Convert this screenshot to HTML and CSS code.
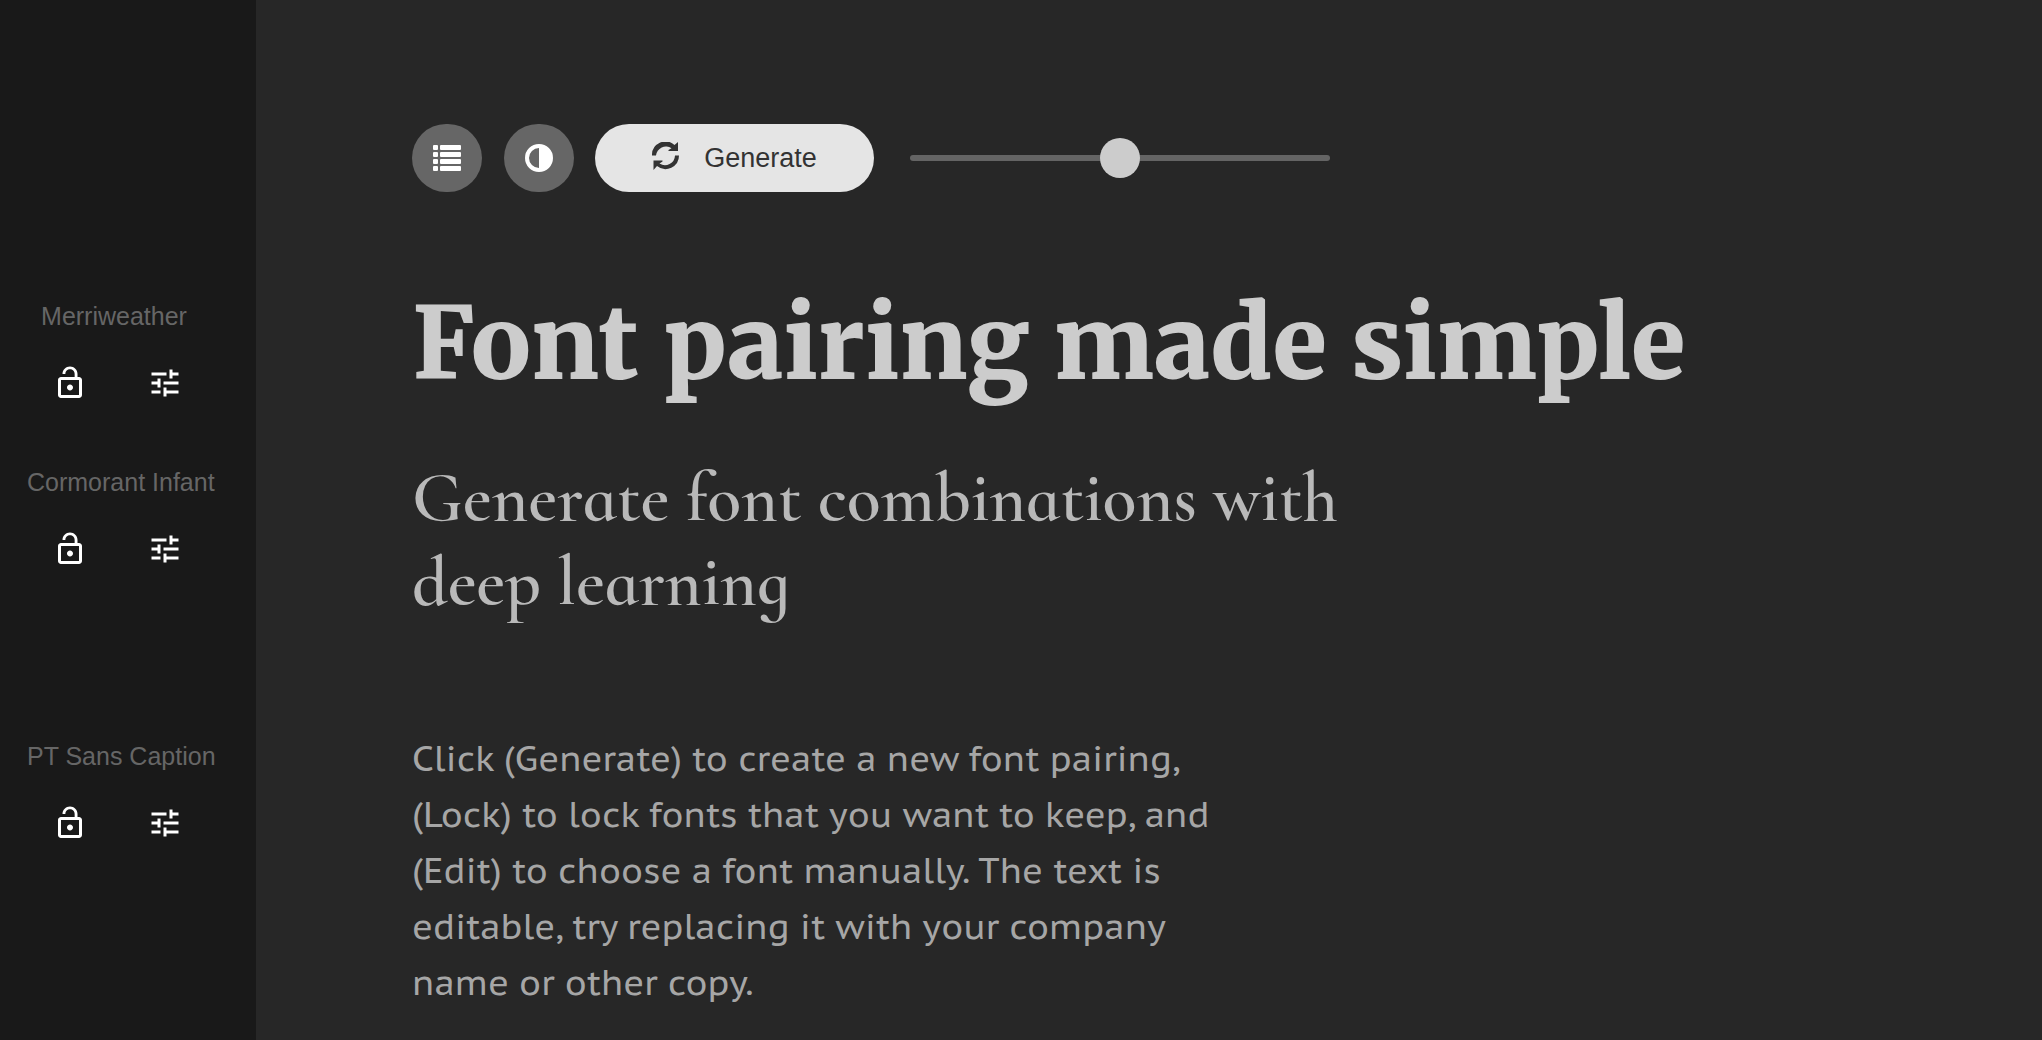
FILE: index.html
```html
<!DOCTYPE html>
<html lang="en">
<head>
<meta charset="utf-8">
<meta name="viewport" content="width=device-width, initial-scale=1">
<title>Font pairing made simple</title>
<link rel="stylesheet" href="styles.css">
</head>
<body>
<svg class="sprite" aria-hidden="true">
  <symbol id="lock-open" viewBox="0 0 24 24"><path d="M12 17c1.1 0 2-.9 2-2s-.9-2-2-2-2 .9-2 2 .9 2 2 2zm6-9h-1V6c0-2.76-2.24-5-5-5S7 3.24 7 6h1.9c0-1.71 1.39-3.1 3.1-3.1 1.71 0 3.1 1.39 3.1 3.1v2H6c-1.1 0-2 .9-2 2v10c0 1.1.9 2 2 2h12c1.1 0 2-.9 2-2V10c0-1.1-.9-2-2-2zm0 12H6V10h12v10z"/></symbol>
  <symbol id="tune" viewBox="0 0 24 24"><path d="M3 17v2h6v-2H3zM3 5v2h10V5H3zm10 16v-2h8v-2h-8v-2h-2v6h2zM7 9v2H3v2h4v2h2V9H7zm14 4v-2H11v2h10zm-6-4h2V7h4V5h-4V3h-2v6z"/></symbol>
</svg>
<div class="app">
  <aside class="sidebar">
    <section class="font">
      <p class="font-name">Merriweather</p>
      <div class="font-actions">
        <button class="icon-button" type="button" aria-label="Lock"><svg><use href="#lock-open"/></svg></button>
        <button class="icon-button" type="button" aria-label="Edit"><svg><use href="#tune"/></svg></button>
      </div>
    </section>
    <section class="font">
      <p class="font-name">Cormorant Infant</p>
      <div class="font-actions">
        <button class="icon-button" type="button" aria-label="Lock"><svg><use href="#lock-open"/></svg></button>
        <button class="icon-button" type="button" aria-label="Edit"><svg><use href="#tune"/></svg></button>
      </div>
    </section>
    <section class="font font-body">
      <p class="font-name">PT Sans Caption</p>
      <div class="font-actions">
        <button class="icon-button" type="button" aria-label="Lock"><svg><use href="#lock-open"/></svg></button>
        <button class="icon-button" type="button" aria-label="Edit"><svg><use href="#tune"/></svg></button>
      </div>
    </section>
  </aside>
  <main class="main">
    <div class="toolbar">
      <button class="round-button" type="button" aria-label="List">
        <svg width="28" height="26" viewBox="0 0 28 26"><rect width="5" height="5" rx="1"/><rect x="7" width="21" height="5" rx="1"/><rect y="7" width="5" height="5" rx="1"/><rect x="7" y="7" width="21" height="5" rx="1"/><rect y="14" width="5" height="5" rx="1"/><rect x="7" y="14" width="21" height="5" rx="1"/><rect y="21" width="5" height="5" rx="1"/><rect x="7" y="21" width="21" height="5" rx="1"/></svg>
      </button>
      <button class="round-button" type="button" aria-label="Contrast">
        <svg width="28" height="28" viewBox="0 0 28 28"><path fill-rule="evenodd" d="M14 0a14 14 0 1 1 0 28a14 14 0 1 1 0-28zM14 4a10 10 0 0 0 0 20z"/></svg>
      </button>
      <button class="generate" type="button">
        <svg class="generate-icon" viewBox="0 0 28 28"><path d="M0 13.500A13.500 13.500 0 0 1 22.500 3L26 0V9H16.500V8L19.500 6.200A10 10 0 0 0 4 13.500zM27 13.500A13.500 13.500 0 0 1 5 24L1.500 28V18.500H10.500V19.500L7.500 21.500A10 10 0 0 0 23 13.500z"/></svg>
        <span>Generate</span>
      </button>
      <input class="slider" type="range" min="0" max="100" value="50" aria-label="Contrast level">
    </div>
    <h1 class="title">Font pairing made simple</h1>
    <h2 class="subtitle">Generate font combinations with deep learning</h2>
    <p class="copy">Click (Generate) to create a new font pairing, (Lock) to lock fonts that you want to keep, and (Edit) to choose a font manually. The text is editable, try replacing it with your company name or other copy.</p>
  </main>
</div>
</body>
</html>
```
FILE: styles.css
```css
* {
  box-sizing: border-box;
}

body {
  margin: 0;
  background: #272727;
  font-family: "Liberation Sans", Arial, sans-serif;
}

h1, h2, p {
  margin: 0;
}

button {
  border: 0;
  padding: 0;
  font: inherit;
  cursor: pointer;
}

svg {
  display: block;
  fill: currentColor;
}

.sprite {
  display: none;
}

.app {
  display: flex;
  min-height: 100vh;
}

.sidebar {
  flex: none;
  width: 256px;
  padding: 301px 55px 0 27px;
  background: #191919;
}

.font {
  margin-bottom: 66px;
}

.font-body {
  margin-top: 174px;
}

.font-name {
  font-size: 25px;
  line-height: 30px;
  color: #666;
  text-align: center;
  white-space: nowrap;
}

.font-actions {
  display: flex;
  gap: 59px;
  padding: 34px 0 0 25px;
}

.icon-button {
  background: none;
  color: #fff;
}

.icon-button svg {
  width: 36px;
  height: 36px;
}

.main {
  flex: 1;
  min-width: 0;
  padding: 124px 156px 0;
}

.toolbar {
  display: flex;
  align-items: center;
}

.round-button {
  display: flex;
  align-items: center;
  justify-content: center;
  width: 70px;
  height: 68px;
  margin-right: 22px;
  border-radius: 35px;
  background: #666;
  color: #fff;
}

.generate {
  display: flex;
  align-items: center;
  justify-content: center;
  gap: 24px;
  width: 279px;
  height: 68px;
  margin-left: -1px;
  border-radius: 34px;
  background: #e5e5e5;
  color: #333;
  font-size: 27px;
}

.generate-icon {
  width: 28px;
  height: 28px;
  margin-bottom: 4px;
}

.slider {
  appearance: none;
  width: 420px;
  height: 6px;
  margin: 0 0 0 36px;
  border-radius: 3px;
  background: #646464;
}

.slider::-webkit-slider-thumb {
  appearance: none;
  width: 40px;
  height: 40px;
  border-radius: 50%;
  background: #ccc;
}

.title {
  margin-top: 82px;
  font-family: Merriweather, "DejaVu Serif Condensed", "DejaVu Serif", serif;
  font-size: 99px;
  font-weight: 900;
  line-height: 140px;
  color: #ccc;
}

.subtitle {
  max-width: 1000px;
  margin-top: 42px;
  font-family: "Cormorant Infant", "Liberation Serif", serif;
  font-size: 70px;
  font-weight: 600;
  line-height: 84px;
  color: #b9b9b9;
}

.copy {
  max-width: 820px;
  margin-top: 106px;
  font-family: "PT Sans Caption", "Noto Sans", sans-serif;
  font-size: 35px;
  line-height: 56px;
  color: #a6a6a6;
}
```
